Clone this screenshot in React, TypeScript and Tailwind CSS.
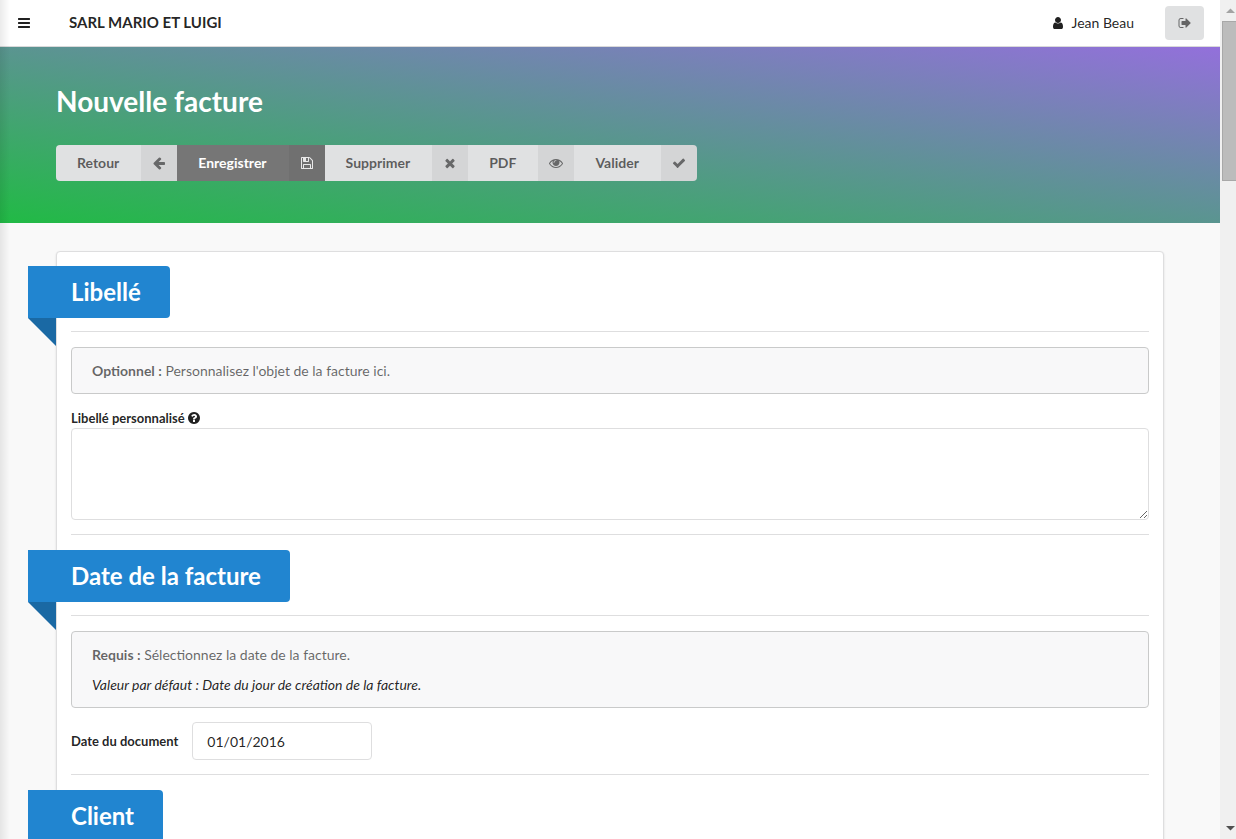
import type { ReactNode } from "react";

const ICONS = {
  bars: "M1664 1344v128q0 26-19 45t-45 19h-1408q-26 0-45-19t-19-45v-128q0-26 19-45t45-19h1408q26 0 45 19t19 45zm0-512v128q0 26-19 45t-45 19h-1408q-26 0-45-19t-19-45v-128q0-26 19-45t45-19h1408q26 0 45 19t19 45zm0-512v128q0 26-19 45t-45 19h-1408q-26 0-45-19t-19-45v-128q0-26 19-45t45-19h1408q26 0 45 19t19 45z",
  user: "M1536 1399q0 109-62.5 187t-150.5 78h-854q-88 0-150.5-78t-62.5-187q0-85 8.5-160.5t31.5-152 58.5-131 94-89 134.5-34.5q131 128 313 128t313-128q76 0 134.5 34.5t94 89 58.5 131 31.5 152 8.5 160.5zm-256-887q0 159-112.5 271.5t-271.5 112.5-271.5-112.5-112.5-271.5 112.5-271.5 271.5-112.5 271.5 112.5 112.5 271.5z",
  signOut:
    "M704 1440q0 4 1 20t.5 26.5-3 23.5-10 19.5-20.5 6.5h-320q-119 0-203.5-84.5t-84.5-203.5v-704q0-119 84.5-203.5t203.5-84.5h320q13 0 22.5 9.5t9.5 22.5q0 4 1 20t.5 26.5-3 23.5-10 19.5-20.5 6.5h-320q-66 0-113 47t-47 113v704q0 66 47 113t113 47h312l11.5 1 11.5 3 8 5.5 7 9 2 13.5zm928-544q0 26-19 45l-544 544q-19 19-45 19t-45-19-19-45v-288h-448q-26 0-45-19t-19-45v-384q0-26 19-45t45-19h448v-288q0-26 19-45t45-19 45 19l544 544q19 19 19 45z",
  arrowLeft:
    "M1664 896v128q0 53-32.5 90.5t-84.5 37.5h-704l293 294q38 36 38 90t-38 90l-75 76q-37 37-90 37-52 0-91-37l-651-652q-37-37-37-90 0-52 37-91l651-650q38-38 91-38 52 0 90 38l75 74q38 38 38 91t-38 91l-293 293h704q52 0 84.5 37.5t32.5 90.5z",
  save: "M512 1536h768v-384h-768v384zm896 0h128v-896q0-14-10-38.5t-20-34.5l-281-281q-10-10-34-20t-39-10v416q0 40-28 68t-68 28h-576q-40 0-68-28t-28-68v-416h-128v1280h128v-416q0-40 28-68t68-28h832q40 0 68 28t28 68v416zm-384-928v-320q0-13-9.5-22.5t-22.5-9.5h-192q-13 0-22.5 9.5t-9.5 22.5v320q0 13 9.5 22.5t22.5 9.5h192q13 0 22.5-9.5t9.5-22.5zm640 32v928q0 40-28 68t-68 28h-1344q-40 0-68-28t-28-68v-1344q0-40 28-68t68-28h928q40 0 88 20t76 48l280 280q28 28 48 76t20 88z",
  times:
    "M1490 1322q0 40-28 68l-136 136q-28 28-68 28t-68-28l-294-294-294 294q-28 28-68 28t-68-28l-136-136q-28-28-28-68t28-68l294-294-294-294q-28-28-28-68t28-68l136-136q28-28 68-28t68 28l294 294 294-294q28-28 68-28t68 28l136 136q28 28 28 68t-28 68l-294 294 294 294q28 28 28 68z",
  eye: "M1664 960q-152-236-381-353 61 104 61 225 0 185-131.5 316.5t-316.5 131.5-316.5-131.5-131.5-316.5q0-121 61-225-229 117-381 353 133 205 333.5 326.5t434.5 121.5 434.5-121.5 333.5-326.5zm-720-384q0-20-14-34t-34-14q-125 0-214.5 89.5t-89.5 214.5q0 20 14 34t34 14 34-14 14-34q0-86 61-147t147-61q20 0 34-14t14-34zm848 384q0 34-20 69-140 230-376.5 368.5t-499.5 138.5-499.5-139-376.5-368q-20-35-20-69t20-69q140-229 376.5-368t499.5-139 499.5 139 376.5 368q20 35 20 69z",
  check:
    "M1671 566q0 40-28 68l-724 724-136 136q-28 28-68 28t-68-28l-136-136-362-362q-28-28-28-68t28-68l136-136q28-28 68-28t68 28l294 295 656-657q28-28 68-28t68 28l136 136q28 28 28 68z",
  question:
    "M1024 1376v-192q0-14-9-23t-23-9h-192q-14 0-23 9t-9 23v192q0 14 9 23t23 9h192q14 0 23-9t9-23zm256-672q0-88-55.5-163t-138.5-116-170-41q-243 0-371 213-15 24 8 42l132 100q7 6 19 6 16 0 25-12 53-68 86-92 34-24 86-24 48 0 85.5 26t37.5 59q0 38-20 61t-68 45q-63 28-115.5 86.5t-52.5 125.5v36q0 14 9 23t23 9h192q14 0 23-9t9-23q0-19 21.5-49.5t54.5-49.5q32-18 49-28.5t46-35 44.5-48 28-60.5 12.5-81zm384 192q0 209-103 385.5t-279.5 279.5-385.5 103-385.5-103-279.5-279.5-103-385.5 103-385.5 279.5-279.5 385.5-103 385.5 103 279.5 279.5 103 385.5z",
};

type IconName = keyof typeof ICONS;

function Icon({ name }: { name: IconName }) {
  return (
    <svg viewBox="0 0 1792 1792" className="size-3.5 shrink-0 fill-current" aria-hidden="true">
      <path d={ICONS[name]} />
    </svg>
  );
}

function ActionButton({ icon, active = false, children }: { icon: IconName; active?: boolean; children: ReactNode }) {
  return (
    <button
      type="button"
      className={
        active
          ? "flex h-9 items-stretch bg-[#767676] font-bold text-white"
          : "flex h-9 items-stretch bg-[#e0e1e2] font-bold text-black/60"
      }
    >
      <span className="flex items-center pr-[22px] pl-[21px]">{children}</span>
      <span className="flex w-9 items-center justify-center bg-black/5">
        <span className="opacity-85">
          <Icon name={icon} />
        </span>
      </span>
    </button>
  );
}

function Ribbon({ children }: { children: ReactNode }) {
  return (
    <div className="-ml-[43px] flex">
      <h2 className="relative flex h-[52px] items-center rounded-r bg-[#2185d0] pr-[29px] pl-[43px] text-2xl font-bold text-white">
        {children}
        <svg viewBox="0 0 28 28" className="absolute top-full left-0 size-7 fill-[#1a69a4]" aria-hidden="true">
          <path d="M0 0H28V28Z" />
        </svg>
      </h2>
    </div>
  );
}

function Divider() {
  return <hr className="border-t border-[#dededf]" />;
}

function Section({ title, children }: { title: string; children: ReactNode }) {
  return (
    <section>
      <Ribbon>{title}</Ribbon>
      <div className="mt-[13px] mb-[15px]">
        <Divider />
      </div>
      {children}
    </section>
  );
}

function Message({ children }: { children: ReactNode }) {
  return (
    <div className="flex flex-col gap-2.5 rounded border border-[#c9caca] bg-[#f8f8f9] px-5 pt-[13px] pb-3 leading-5 text-black/60">
      {children}
    </div>
  );
}

export default function App() {
  return (
    <div className="flex h-screen bg-[#f9f9f9] font-[Lato,sans-serif] text-sm text-black/87">
      <div className="relative flex min-w-0 flex-1 flex-col">
        <header className="flex h-[47px] shrink-0 items-center border-b border-[#d9d9da] bg-white pr-4 pl-[17px]">
          <button type="button" aria-label="Menu" className="flex">
            <Icon name="bars" />
          </button>
          <span className="ml-[38px] text-[15px] font-bold">SARL MARIO ET LUIGI</span>
          <a href="#profil" className="ml-auto flex items-center gap-1.5">
            <Icon name="user" />
            Jean Beau
          </a>
          <button
            type="button"
            aria-label="Déconnexion"
            className="ml-[31px] flex h-[34px] w-[39px] items-center justify-center rounded bg-[#e0e1e2] text-black/55"
          >
            <Icon name="signOut" />
          </button>
        </header>

        <main className="min-h-0 flex-1 overflow-y-auto [scrollbar-width:none]">
          <div className="h-44 bg-[linear-gradient(to_top_right,#21ba45,#9370db)] px-14 pt-9">
            <h1 className="text-[28px] leading-9 font-bold text-white">Nouvelle facture</h1>
            <div className="mt-[26px] flex w-fit overflow-hidden rounded">
              <ActionButton icon="arrowLeft">Retour</ActionButton>
              <ActionButton icon="save" active>
                Enregistrer
              </ActionButton>
              <ActionButton icon="times">Supprimer</ActionButton>
              <ActionButton icon="eye">PDF</ActionButton>
              <ActionButton icon="check">Valider</ActionButton>
            </div>
          </div>

          <div className="mx-14 my-7 rounded border border-[#dededf] bg-white p-3.5 shadow-[0_1px_2px_0_rgba(34,36,38,0.15)]">
            <Section title="Libellé">
              <Message>
                <p>
                  <b>Optionnel :</b> Personnalisez l'objet de la facture ici.
                </p>
              </Message>
              <label htmlFor="libelle" className="mt-3.5 flex h-5 items-center gap-0.5 text-[13px] font-bold">
                Libellé personnalisé
                <Icon name="question" />
              </label>
              <textarea
                id="libelle"
                className="block h-[92px] w-full resize-y rounded border border-[#dededf] bg-white px-3.5 py-2.5"
              />
            </Section>
            <div className="mt-3.5 mb-[15px]">
              <Divider />
            </div>
            <Section title="Date de la facture">
              <Message>
                <p>
                  <b>Requis :</b> Sélectionnez la date de la facture.
                </p>
                <p className="text-black/87 italic">Valeur par défaut : Date du jour de création de la facture.</p>
              </Message>
              <div className="mt-3.5 flex items-center gap-3.5">
                <label htmlFor="date" className="text-[13px] font-bold">
                  Date du document
                </label>
                <input
                  id="date"
                  type="text"
                  defaultValue="01/01/2016"
                  className="h-[38px] w-[180px] rounded border border-[#dededf] bg-white px-3.5"
                />
              </div>
            </Section>
            <div className="mt-3.5 mb-[15px]">
              <Divider />
            </div>
            <Section title="Client">{null}</Section>
          </div>
        </main>
        <div className="pointer-events-none absolute inset-y-0 left-0 w-2.5 bg-linear-to-r from-black/8 to-transparent" />
      </div>

      <div className="flex w-4 shrink-0 flex-col items-end bg-[#f0f0f0]" aria-hidden="true">
        <svg viewBox="0 0 16 21" className="h-[21px] w-4 fill-[#a3a3a3]">
          <path d="M6 13L10.500 8.500L15 13Z" />
        </svg>
        <div className="h-40 w-3.5 border border-r-0 border-[#a8a8a8] bg-[#bcbcbc]" />
        <svg viewBox="0 0 16 17" className="mt-auto h-[17px] w-4 fill-[#505050]">
          <path d="M6 4L10.500 8.500L15 4Z" />
        </svg>
      </div>
    </div>
  );
}
